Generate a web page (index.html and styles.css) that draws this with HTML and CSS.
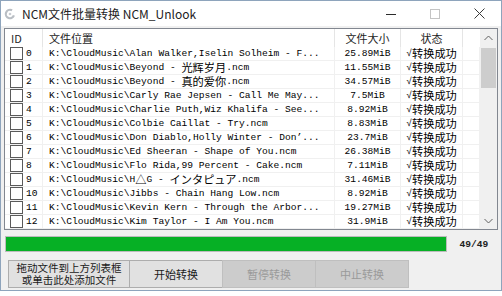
FILE: index.html
```html
<!DOCTYPE html>
<html lang="zh-CN">
<head>
  <meta charset="UTF-8">
  <title>NCM文件批量转换 NCM_Unlook</title>
  <link rel="stylesheet" href="styles.css">
</head>
<body>

  <div class="window">
    <!-- Title bar -->
    <div class="titlebar">
      <svg class="app-icon" width="12" height="12" viewBox="0 0 12 12">
        <circle cx="6" cy="6" r="4.2" fill="none" stroke="#b9bec4" stroke-width="2.2" stroke-dasharray="20 6.4" transform="rotate(20 6 6)"/>
        <circle cx="6" cy="6" r="1.3" fill="#c9cdd2"/>
      </svg>
      <span class="title">NCM文件批量转换 NCM_Unlook</span>
      <div class="controls">
        <span class="ctl"><svg width="10" height="10" viewBox="0 0 10 10"><path d="M0 5.5h10" stroke="#2b2b2b" stroke-width="1"/></svg></span>
        <span class="ctl"><svg width="10" height="10" viewBox="0 0 10 10"><rect x="0.5" y="0.5" width="9" height="9" fill="none" stroke="#c4c4c4"/></svg></span>
        <span class="ctl"><svg width="11" height="11" viewBox="0 0 11 11"><path d="M0.5 0.5L10.5 10.5M10.5 0.5L0.5 10.5" stroke="#3a3a3a" stroke-width="1"/></svg></span>
      </div>
    </div>

    <div class="client">
      <!-- File list -->
      <div class="listview">
        <div class="lv-body">
          <div class="lv-row lv-head">
            <div class="cell">ID</div>
            <div class="cell">文件位置</div>
            <div class="cell center">文件大小</div>
            <div class="cell center">状态</div>
            <div class="cell"></div>
          </div>
          <div id="rows"></div>
        </div>
        <div class="vscroll">
          <div class="sb-btn"><svg width="9" height="6" viewBox="0 0 9 6"><path d="M0.5 5L4.5 1L8.5 5" fill="none" stroke="#606060"/></svg></div>
          <div class="sb-track"><div class="sb-thumb"></div></div>
          <div class="sb-btn"><svg width="9" height="6" viewBox="0 0 9 6"><path d="M0.5 1L4.5 5L8.5 1" fill="none" stroke="#606060"/></svg></div>
        </div>
      </div>

      <!-- Progress -->
      <div class="progress-row">
        <div class="progress"><div class="progress-fill" style="width: 100%"></div></div>
        <span class="count">49/49</span>
      </div>

      <!-- Buttons -->
      <div class="buttons">
        <button class="btn btn-add">拖动文件到上方列表框<br>或单击此处添加文件</button>
        <button class="btn">开始转换</button>
        <button class="btn" disabled>暂停转换</button>
        <button class="btn" disabled>中止转换</button>
      </div>
    </div>
  </div>

  <script>
    const files = [
      ['K:\\CloudMusic\\Alan Walker,Iselin Solheim - F...', '25.89MiB'],
      ['K:\\CloudMusic\\Beyond - <span class="wide">光辉岁月</span>.ncm', '11.55MiB'],
      ['K:\\CloudMusic\\Beyond - <span class="wide">真的爱你</span>.ncm', '34.57MiB'],
      ['K:\\CloudMusic\\Carly Rae Jepsen - Call Me May...', '7.5MiB'],
      ['K:\\CloudMusic\\Charlie Puth,Wiz Khalifa - See...', '8.92MiB'],
      ['K:\\CloudMusic\\Colbie Caillat - Try.ncm', '8.83MiB'],
      ['K:\\CloudMusic\\Don Diablo,Holly Winter - Don\u2019...', '23.7MiB'],
      ['K:\\CloudMusic\\Ed Sheeran - Shape of You.ncm', '26.38MiB'],
      ['K:\\CloudMusic\\Flo Rida,99 Percent - Cake.ncm', '7.11MiB'],
      ['K:\\CloudMusic\\H<span class="wide">△</span>G - <span class="wide jp">インタピュア</span>.ncm', '31.46MiB'],
      ['K:\\CloudMusic\\Jibbs - Chain Hang Low.ncm', '8.92MiB'],
      ['K:\\CloudMusic\\Kevin Kern - Through the Arbor...', '19.27MiB'],
      ['K:\\CloudMusic\\Kim Taylor - I Am You.ncm', '31.9MiB']
    ];

    const list = document.getElementById('rows');
    files.forEach(function (f, i) {
      const row = document.createElement('div');
      row.className = 'lv-row';
      row.innerHTML =
        '<div class="cell id"><span class="checkbox"></span>' + i + '</div>' +
        '<div class="cell path">' + f[0] + '</div>' +
        '<div class="cell center">' + f[1] + '</div>' +
        '<div class="cell center">√<span class="wide">转换成功</span></div>' +
        '<div class="cell"></div>';
      list.appendChild(row);
    });
  </script>
</body>
</html>
```

FILE: styles.css
```css
body {
  margin: 0;
  background-color: #fff;
  font-family: "Noto Sans CJK SC", "Noto Sans", sans-serif;
}

/* Window frame */
.window {
  width: 502px;
  height: 291px;
  box-sizing: border-box;
  border: 1px solid #8ea4bc;
  display: flex;
  flex-direction: column;
}

.titlebar {
  height: 25px;
  background-color: #fff;
  display: flex;
  align-items: center;
  flex-shrink: 0;
}

.app-icon {
  margin: 0 6px 0 3px;
}

.title {
  font-size: 12px;
  color: #222;
  line-height: 25px;
}

.controls {
  margin-left: auto;
  display: flex;
  height: 25px;
}

.ctl {
  width: 44px;
  display: flex;
  align-items: center;
  justify-content: center;
}

.client {
  flex: 1;
  background-color: #f0f0f0;
  padding-top: 2px;
}

/* List view */
.listview {
  margin-left: 3px;
  width: 494px;
  height: 202px;
  box-sizing: border-box;
  border: 1px solid #828790;
  background-color: #fff;
  display: flex;
}

.lv-body {
  width: 475px;
  overflow: hidden;
}

.lv-row {
  display: grid;
  grid-template-columns: 38px 292px 66px 62px 17px;
  height: 14px;
  font-family: "Liberation Mono", monospace;
  font-size: 9.6px;
  color: #000;
}

.lv-row .cell {
  box-sizing: border-box;
  height: 14px;
  border-right: 1px solid #f0f0f0;
  border-bottom: 1px solid #f0f0f0;
  line-height: 13px;
  white-space: nowrap;
}

.lv-row .cell.center {
  text-align: center;
}

.lv-row .cell.path {
  padding-left: 6px;
  overflow: hidden;
}

.lv-row .cell.id {
  padding-left: 5px;
}

.wide {
  font-family: "Noto Sans CJK SC", sans-serif;
  font-size: 11.2px;
  line-height: 13px;
  vertical-align: top;
}

.wide.jp {
  font-family: "Noto Sans CJK JP", sans-serif;
}

.checkbox {
  display: inline-block;
  width: 11px;
  height: 11px;
  border: 1px solid #5a5a5a;
  background-color: #fff;
  margin: 0 3px 0 0;
  vertical-align: top;
}

.lv-head {
  height: 18px;
  font-family: "Noto Sans CJK SC", sans-serif;
  font-size: 11px;
  color: #1e1e1e;
}

.lv-head .cell {
  height: 18px;
  border-right: 1px solid #e5e5e5;
  border-bottom: none;
  padding-left: 6px;
  line-height: 18px;
}

.lv-head .cell.center {
  padding-left: 0;
}

.lv-head .cell:last-child {
  border-right: none;
}

/* Scrollbar */
.vscroll {
  width: 17px;
  background-color: #f0f0f0;
  display: flex;
  flex-direction: column;
}

.sb-btn {
  height: 17px;
  display: flex;
  align-items: center;
  justify-content: center;
}

.sb-track {
  flex: 1;
  padding: 2px 1px 0;
}

.sb-thumb {
  height: 40px;
  background-color: #cdcdcd;
}

/* Progress */
.progress-row {
  display: flex;
  align-items: center;
  margin-top: 6px;
  height: 16px;
}

.progress {
  margin-left: 4px;
  width: 442px;
  height: 16px;
  box-sizing: border-box;
  border: 1px solid #bcbcbc;
  background-color: #e6e6e6;
}

.progress-fill {
  height: 100%;
  background-color: #06b025;
}

.count {
  flex: 1;
  text-align: center;
  font-family: "Liberation Mono", monospace;
  font-size: 9.6px;
  font-weight: bold;
  color: #222;
}

/* Buttons */
.buttons {
  display: flex;
  margin: 8px 0 0 7px;
  height: 28px;
}

.btn {
  width: 94px;
  height: 28px;
  margin: 0 -1px 0 0;
  padding: 0;
  border: 1px solid #adadad;
  background-color: #e1e1e1;
  font-family: "Noto Sans CJK SC", sans-serif;
  font-size: 11px;
  color: #1a1a1a;
}

.btn-add {
  width: 122px;
  font-size: 10.5px;
  line-height: 12px;
}

.btn:disabled {
  background-color: #cccccc;
  border-color: #bfbfbf;
  color: #9a9a9a;
}
```
